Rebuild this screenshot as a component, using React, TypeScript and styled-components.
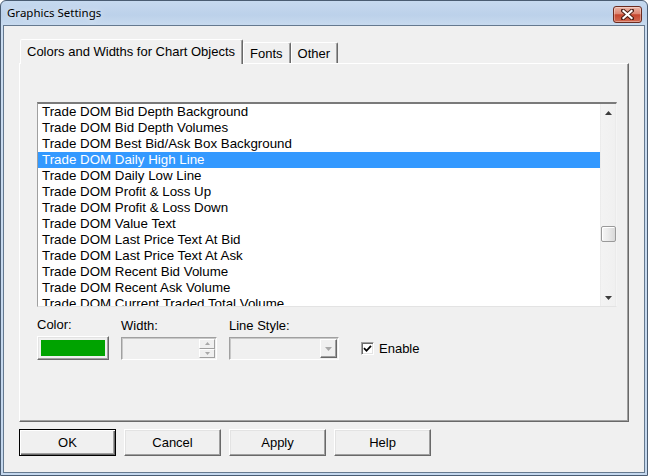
import React from "react";
import styled, { createGlobalStyle } from "styled-components";

const GlobalStyle = createGlobalStyle`
  html, body { margin: 0; padding: 0; background: #ffffff; }
  body { font-family: "Liberation Sans", Arial, sans-serif; overflow: hidden; color: #000; }
  * { box-sizing: border-box; }
`;

const Window = styled.div`
  width: 648px;
  height: 476px;
  display: flex;
  flex-direction: column;
  background: linear-gradient(to bottom, #c6d9ef 0px, #bcd1ea 14px, #cadcf0 26px, #c4d7ed 100%);
  border: 1px solid #4a5c72;
  border-radius: 6px 6px 0 0;
  padding: 0 2px 2px 2px;
`;

const TitleBar = styled.div`
  height: 24px;
  display: flex;
  align-items: center;
  justify-content: space-between;
  padding: 0 3px 0 4px;
`;

const TitleText = styled.span`
  font-family: "Noto Sans", "Liberation Sans", sans-serif;
  font-size: 11.5px;
  color: #000;
  text-shadow: 0 0 6px rgba(255, 255, 255, 0.9);
  margin-top: -1px;
`;

const CloseButton = styled.div`
  width: 29px;
  height: 17px;
  margin-top: 2px;
  border: 1px solid #6b2b1f;
  border-radius: 3px;
  background: linear-gradient(to bottom, #eab4a6 0%, #dd8672 45%, #c6462e 52%, #d06a52 100%);
  box-shadow: inset 0 0 0 1px rgba(255, 255, 255, 0.35);
  display: flex;
  align-items: center;
  justify-content: center;
`;

const Client = styled.div`
  flex: 1;
  display: flex;
  flex-direction: column;
  background: #f0f0f0;
  border: 1px solid #65798f;
  padding: 13px 15px 0 15px;
`;

const TabStrip = styled.div`
  display: flex;
  align-items: flex-end;
  height: 24px;
  padding-left: 1px;
  position: relative;
  z-index: 1;
`;

const Tab = styled.div<{ $active?: boolean }>`
  height: ${(p) => (p.$active ? 25 : 21)}px;
  margin-bottom: ${(p) => (p.$active ? -1 : 0)}px;
  padding: 0 7px ${(p) => (p.$active ? 2 : 0)}px 6px;
  display: flex;
  align-items: center;
  font-size: 13px;
  white-space: nowrap;
  background: #f0f0f0;
  border-style: solid;
  border-width: 1px 1px 0 1px;
  border-color: #ffffff #696969 transparent #ffffff;
  box-shadow: inset -1px 0 0 #a0a0a0;
  border-radius: 2px 2px 0 0;
`;

const Panel = styled.div`
  height: 359px;
  display: flex;
  flex-direction: column;
  border: 1px solid;
  border-color: #ffffff #696969 #696969 #ffffff;
  box-shadow: inset -1px -1px 0 #a0a0a0;
  padding: 38px 0 0 17px;
`;

const ListBox = styled.div`
  width: 580px;
  height: 205px;
  display: flex;
  background: #ffffff;
  border-style: solid;
  border-width: 2px 1px 1px 1px;
  border-color: #7a7a7a #f4f4f4 #e3e3e3 #a0a0a0;
  overflow: hidden;
`;

const Rows = styled.div`
  flex: 1;
  overflow: hidden;
`;

const Row = styled.div<{ $selected?: boolean }>`
  height: 16px;
  line-height: 16px;
  padding-left: 4px;
  font-size: 13.33px;
  white-space: nowrap;
  background: ${(p) => (p.$selected ? "#3399ff" : "transparent")};
  color: ${(p) => (p.$selected ? "#ffffff" : "#000000")};
`;

const ScrollBar = styled.div`
  width: 16px;
  display: flex;
  flex-direction: column;
  background: linear-gradient(to right, #e4e4e4 0px, #f3f3f3 1px, #f0f0f0 15px, #e6e6e6 16px);
`;

const ScrollArrow = styled.div`
  height: 17px;
  display: flex;
  align-items: center;
  justify-content: center;
`;

const Track = styled.div`
  flex: 1;
  display: flex;
  flex-direction: column;
  align-items: center;
`;

const Thumb = styled.div`
  width: 15px;
  height: 16px;
  border: 1px solid #9a9a9a;
  border-radius: 2px;
  background: linear-gradient(to right, #f6f6f6 0%, #ebebeb 45%, #d9d9d9 100%);
  box-shadow: inset 1px 1px 0 #ffffff;
`;

const FieldRow = styled.div`
  display: flex;
  align-items: flex-end;
  gap: 12px;
  margin-top: 10px;
`;

const Field = styled.div<{ $width: number }>`
  width: ${(p) => p.$width}px;
  display: flex;
  flex-direction: column;
`;

const Label = styled.div`
  font-size: 13px;
  line-height: 16px;
  height: 16px;
  margin-bottom: 3px;
  white-space: nowrap;
`;

const ColorButton = styled.div`
  height: 24px;
  padding: 3px;
  background: #f0f0f0;
  border: 1px solid;
  border-color: #ffffff #696969 #696969 #ffffff;
  box-shadow: inset -1px -1px 0 #a0a0a0, inset 1px 1px 0 #e3e3e3;
`;

const Swatch = styled.div<{ $color: string }>`
  width: 100%;
  height: 100%;
  background: ${(p) => p.$color};
`;

const SunkenBox = styled.div`
  height: 23px;
  display: flex;
  justify-content: flex-end;
  align-items: stretch;
  background: #f0f0f0;
  border: 1px solid;
  border-color: #a0a0a0 #ffffff #ffffff #a0a0a0;
  box-shadow: inset 1px 1px 0 #c8c8c8;
  padding: 1px 1px 1px 0;
`;

const SpinButtons = styled.div`
  width: 16px;
  display: flex;
  flex-direction: column;
`;

const SpinButton = styled.div`
  flex: 1;
  display: flex;
  align-items: center;
  justify-content: center;
  background: #f0f0f0;
  border: 1px solid;
  border-color: #ffffff #a0a0a0 #a0a0a0 #ffffff;
`;

const DropButton = styled.div`
  width: 17px;
  display: flex;
  align-items: center;
  justify-content: center;
  background: #f0f0f0;
  border: 1px solid;
  border-color: #ffffff #696969 #696969 #ffffff;
  box-shadow: inset -1px -1px 0 #a0a0a0;
`;

const CheckField = styled.label`
  height: 24px;
  display: flex;
  align-items: center;
  margin-left: 10px;
  font-size: 13px;
`;

const CheckBox = styled.div`
  width: 13px;
  height: 13px;
  background: #ffffff;
  border: 1px solid;
  border-color: #a0a0a0 #ffffff #ffffff #a0a0a0;
  box-shadow: inset 1px 1px 0 #696969, inset -1px -1px 0 #e3e3e3;
  display: flex;
  align-items: center;
  justify-content: center;
  margin-right: 5px;
`;

const ButtonRow = styled.div`
  display: flex;
  gap: 8px;
  margin-top: 7px;
`;

const DialogButton = styled.div<{ $default?: boolean }>`
  width: 97px;
  height: 27px;
  display: flex;
  align-items: center;
  justify-content: center;
  font-size: 13px;
  background: #f0f0f0;
  border: 1px solid;
  border-color: ${(p) => (p.$default ? "#000000" : "#ffffff #696969 #696969 #ffffff")};
  box-shadow: ${(p) =>
    p.$default
      ? "inset 1px 1px 0 #ffffff, inset -1px -1px 0 #696969, inset -2px -2px 0 #a0a0a0"
      : "inset -1px -1px 0 #a0a0a0, inset 1px 1px 0 #e3e3e3"};
`;

const items = [
  "Trade DOM Bid Depth Background",
  "Trade DOM Bid Depth Volumes",
  "Trade DOM Best Bid/Ask Box Background",
  "Trade DOM Daily High Line",
  "Trade DOM Daily Low Line",
  "Trade DOM Profit & Loss Up",
  "Trade DOM Profit & Loss Down",
  "Trade DOM Value Text",
  "Trade DOM Last Price Text At Bid",
  "Trade DOM Last Price Text At Ask",
  "Trade DOM Recent Bid Volume",
  "Trade DOM Recent Ask Volume",
  "Trade DOM Current Traded Total Volume",
];

const selectedIndex = 3;
const thumbOffset = 105;

const Arrow = ({ up, color, w = 7, h = 4 }: { up: boolean; color: string; w?: number; h?: number }) => (
  <svg width={w} height={h} viewBox={`0 0 ${w} ${h}`}>
    <polygon
      points={up ? `0,${h} ${w / 2},0 ${w},${h}` : `0,0 ${w},0 ${w / 2},${h}`}
      fill={color}
    />
  </svg>
);

export default function App() {
  return (
    <>
      <GlobalStyle />
      <Window>
        <TitleBar>
          <TitleText>Graphics Settings</TitleText>
          <CloseButton>
            <svg width="13" height="11" viewBox="0 0 13 11">
              <path d="M2 1.5 L11 9.5 M11 1.5 L2 9.5" stroke="#4a1d14" strokeWidth="4" strokeLinecap="square" />
              <path d="M2.5 2 L10.5 9 M10.5 2 L2.5 9" stroke="#ffffff" strokeWidth="2.2" strokeLinecap="square" />
            </svg>
          </CloseButton>
        </TitleBar>
        <Client>
          <TabStrip>
            <Tab $active>Colors and Widths for Chart Objects</Tab>
            <Tab>Fonts</Tab>
            <Tab>Other</Tab>
          </TabStrip>
          <Panel>
            <ListBox>
              <Rows>
                {items.map((item, i) => (
                  <Row key={item} $selected={i === selectedIndex}>
                    {item}
                  </Row>
                ))}
              </Rows>
              <ScrollBar>
                <ScrollArrow>
                  <Arrow up color="#3c3c3c" />
                </ScrollArrow>
                <Track>
                  <Thumb style={{ marginTop: thumbOffset }} />
                </Track>
                <ScrollArrow>
                  <Arrow up={false} color="#3c3c3c" />
                </ScrollArrow>
              </ScrollBar>
            </ListBox>
            <FieldRow>
              <Field $width={72}>
                <Label>Color:</Label>
                <ColorButton>
                  <Swatch $color="#00a300" />
                </ColorButton>
              </Field>
              <Field $width={96}>
                <Label>Width:</Label>
                <SunkenBox>
                  <SpinButtons>
                    <SpinButton>
                      <Arrow up color="#a8a8a8" w={5} h={3} />
                    </SpinButton>
                    <SpinButton>
                      <Arrow up={false} color="#a8a8a8" w={5} h={3} />
                    </SpinButton>
                  </SpinButtons>
                </SunkenBox>
              </Field>
              <Field $width={110}>
                <Label>Line Style:</Label>
                <SunkenBox>
                  <DropButton>
                    <Arrow up={false} color="#a8a8a8" w={7} h={4} />
                  </DropButton>
                </SunkenBox>
              </Field>
              <CheckField>
                <CheckBox>
                  <svg width="9" height="9" viewBox="0 0 9 9">
                    <path d="M1 4.2 L3.5 6.8 L8 1.8" stroke="#000" strokeWidth="1.8" fill="none" />
                  </svg>
                </CheckBox>
                Enable
              </CheckField>
            </FieldRow>
          </Panel>
          <ButtonRow>
            <DialogButton $default>OK</DialogButton>
            <DialogButton>Cancel</DialogButton>
            <DialogButton>Apply</DialogButton>
            <DialogButton>Help</DialogButton>
          </ButtonRow>
        </Client>
      </Window>
    </>
  );
}
